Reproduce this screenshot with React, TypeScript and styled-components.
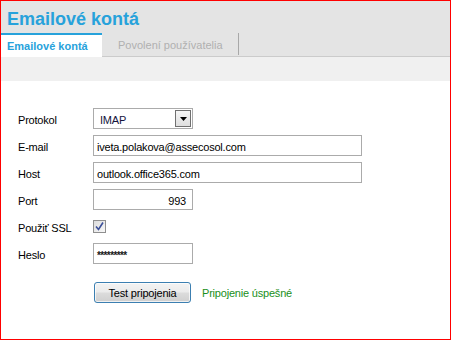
import React from "react";
import styled, { createGlobalStyle } from "styled-components";

const Global = createGlobalStyle`
  html, body { margin: 0; padding: 0; background: #ffffff; }
  body { font-family: "Liberation Sans", Arial, sans-serif; }
  * { box-sizing: border-box; }
`;

const Frame = styled.div`
  width: 451px;
  height: 340px;
  border: 1px solid #ff0000;
  background: #ffffff;
  display: flex;
  flex-direction: column;
  overflow: hidden;
`;

const Header = styled.header`
  background: #e4e4e4;
  display: flex;
  flex-direction: column;
`;

const Title = styled.h1`
  margin: 0;
  height: 32px;
  padding: 9px 0 0 6px;
  font-size: 18px;
  line-height: 18px;
  font-weight: bold;
  color: #27a2db;
`;

const TabBar = styled.nav`
  display: flex;
  height: 24px;
`;

const Tab = styled.div<{ $active?: boolean }>`
  display: flex;
  align-items: center;
  font-size: 11px;
  ${(p) =>
    p.$active
      ? `
    width: 101px;
    padding: 0 0 0 6px;
    background: #ffffff;
    border-top: 2px solid #27a2db;
    color: #27a2db;
    font-weight: bold;
  `
      : `
    align-items: flex-start;
    border-bottom: 1px solid #cbcbcb;
    color: #b0b0b0;
  `}
`;

const TabText = styled.span`
  display: flex;
  align-items: center;
  height: 22px;
  padding: 2px 15px 0 16px;
  border-right: 1px solid #a8a8a8;
`;

const TabFiller = styled.div`
  flex: 1;
  border-bottom: 1px solid #cbcbcb;
`;

const Band = styled.div`
  height: 24px;
  background: #f0f0f0;
`;

const Form = styled.div`
  display: grid;
  grid-template-columns: 75px auto;
  grid-auto-rows: 21px;
  row-gap: 6px;
  padding: 27px 0 0 17px;
  font-size: 11px;
  letter-spacing: -0.2px;
  color: #000000;
`;

const Label = styled.label`
  display: flex;
  align-items: center;
  padding-top: 2px;
`;

const Cell = styled.div`
  display: flex;
  align-items: center;
`;

const Field = styled.div<{ $width: number; $right?: boolean }>`
  width: ${(p) => p.$width}px;
  height: 21px;
  border: 1px solid #ababab;
  background: #ffffff;
  display: flex;
  align-items: center;
  justify-content: ${(p) => (p.$right ? "flex-end" : "flex-start")};
  padding: 2px ${(p) => (p.$right ? "6px" : "0")} 0 3px;
  white-space: nowrap;
`;

const Select = styled.div`
  width: 100px;
  height: 21px;
  border: 1px solid #ababab;
  background: #ffffff;
  display: flex;
  padding: 1px;
`;

const SelectValue = styled.span`
  flex: 1;
  display: flex;
  align-items: center;
  padding: 2px 0 0 5px;
  color: #14143c;
`;

const DropButton = styled.span`
  width: 16px;
  border: 1px solid #707070;
  background: linear-gradient(#f6f6f6, #dedede);
  display: flex;
  align-items: center;
  justify-content: center;
`;

const Checkbox = styled.span`
  width: 13px;
  height: 13px;
  border: 1px solid #8f8f8f;
  background: linear-gradient(135deg, #dcdcdc, #f8f8f8);
  display: flex;
  align-items: center;
  justify-content: center;
`;

const Password = styled.span`
  font-size: 10px;
  letter-spacing: -0.6px;
  color: #1a1a1a;
  font-weight: bold;
  padding-top: 2px;
`;

const ActionRow = styled.div`
  display: flex;
  align-items: center;
  gap: 11px;
  margin: 18px 0 0 93px;
  font-size: 11px;
  letter-spacing: -0.2px;
`;

const Button = styled.button`
  width: 97px;
  height: 21px;
  margin: 0;
  padding: 0;
  border: 1px solid #3c7fb1;
  border-radius: 3px;
  background: linear-gradient(#f3f3f3 0%, #ebebeb 48%, #dcdcdc 52%, #cfcfcf 100%);
  box-shadow: inset 0 0 0 1px rgba(255, 255, 255, 0.7);
  font-family: "Liberation Sans", Arial, sans-serif;
  font-size: 11px;
  letter-spacing: -0.2px;
  color: #000000;
`;

const Status = styled.span`
  color: #1a8f1a;
`;

export default function App() {
  return (
    <>
      <Global />
      <Frame>
        <Header>
          <Title>Emailové kontá</Title>
          <TabBar>
            <Tab $active>Emailové kontá</Tab>
            <Tab>
              <TabText>Povolení používatelia</TabText>
            </Tab>
            <TabFiller />
          </TabBar>
        </Header>
        <Band />
        <Form>
          <Label>Protokol</Label>
          <Cell>
            <Select>
              <SelectValue>IMAP</SelectValue>
              <DropButton>
                <svg width="7" height="4" viewBox="0 0 7 4">
                  <path d="M0 0H7L3.5 4Z" fill="#000" />
                </svg>
              </DropButton>
            </Select>
          </Cell>
          <Label>E-mail</Label>
          <Cell>
            <Field $width={269}>iveta.polakova@assecosol.com</Field>
          </Cell>
          <Label>Host</Label>
          <Cell>
            <Field $width={269}>outlook.office365.com</Field>
          </Cell>
          <Label>Port</Label>
          <Cell>
            <Field $width={100} $right>
              993
            </Field>
          </Cell>
          <Label>Použiť SSL</Label>
          <Cell>
            <Checkbox>
              <svg width="9" height="9" viewBox="0 0 9 9">
                <path d="M1 4.5L3.5 7.5L8 0.5" stroke="#3b4f99" strokeWidth="1.6" fill="none" />
              </svg>
            </Checkbox>
          </Cell>
          <Label>Heslo</Label>
          <Cell>
            <Field $width={100}>
              <Password>*********</Password>
            </Field>
          </Cell>
        </Form>
        <ActionRow>
          <Button>Test pripojenia</Button>
          <Status>Pripojenie úspešné</Status>
        </ActionRow>
      </Frame>
    </>
  );
}
